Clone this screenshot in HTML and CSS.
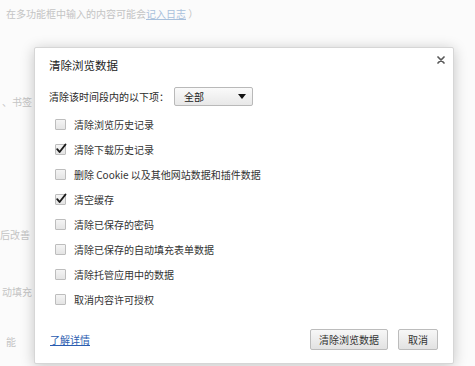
FILE: index.html
```html
<!DOCTYPE html>
<html lang="zh">
<head>
<meta charset="utf-8">
<link rel="stylesheet" href="styles.css">
</head>
<body>
<div class="page">
  <div class="bg-line top">在多功能框中输入的内容可能会<span class="bg-link">记入日志</span> ）</div>
  <div class="bg-line side l1">、书签和</div>
  <div class="bg-line side l2">后改善</div>
  <div class="bg-line side l3">动填充</div>
  <div class="bg-line side l4">能</div>
</div>

<div class="dialog">
  <div class="dlg-head">
    <span class="dlg-title">清除浏览数据</span>
    <span class="dlg-close">
      <svg width="8" height="8" viewBox="0 0 8 8"><path d="M1 1 L7 7 M7 1 L1 7" stroke="#5a5a5a" stroke-width="1.7" stroke-linecap="round"/></svg>
    </span>
  </div>
  <div class="time-row">
    <span class="time-label">清除该时间段内的以下项：</span>
    <span class="select">
      <span class="select-text">全部</span>
      <svg class="select-arrow" width="8" height="5" viewBox="0 0 8 5"><path d="M0 0 H8 L4 5 Z" fill="#111"/></svg>
    </span>
  </div>
  <div class="opts">
    <label class="opt"><span class="cb"></span><span>清除浏览历史记录</span></label>
    <label class="opt"><span class="cb"><svg width="12" height="12" viewBox="0 0 12 12"><path d="M2.2 6.2 L4.6 9 L10.5 1.5" fill="none" stroke="#1a1a1a" stroke-width="1.9" stroke-linecap="round" stroke-linejoin="round"/></svg></span><span>清除下载历史记录</span></label>
    <label class="opt"><span class="cb"></span><span>删除 Cookie 以及其他网站数据和插件数据</span></label>
    <label class="opt"><span class="cb"><svg width="12" height="12" viewBox="0 0 12 12"><path d="M2.2 6.2 L4.6 9 L10.5 1.5" fill="none" stroke="#1a1a1a" stroke-width="1.9" stroke-linecap="round" stroke-linejoin="round"/></svg></span><span>清空缓存</span></label>
    <label class="opt"><span class="cb"></span><span>清除已保存的密码</span></label>
    <label class="opt"><span class="cb"></span><span>清除已保存的自动填充表单数据</span></label>
    <label class="opt"><span class="cb"></span><span>清除托管应用中的数据</span></label>
    <label class="opt"><span class="cb"></span><span>取消内容许可授权</span></label>
  </div>
  <div class="dlg-foot">
    <a class="learn" href="#">了解详情</a>
    <div class="btns">
      <span class="btn btn-main">清除浏览数据</span>
      <span class="btn btn-cancel">取消</span>
    </div>
  </div>
</div>
</body>
</html>
```

FILE: styles.css
```css
html, body {
  margin: 0;
  padding: 0;
}
body {
  width: 475px;
  height: 366px;
  overflow: hidden;
  background: #fbfbfb;
  font-family: "Noto Sans CJK SC", "Noto Sans", sans-serif;
  position: relative;
}
.page {
  padding-left: 6px;
  color: #c4c4c4;
  font-size: 10px;
  line-height: 14px;
}
.bg-line { white-space: nowrap; }
.bg-line.top { padding-top: 7px; }
.bg-line.side { width: 30px; overflow: hidden; }
.bg-link { color: #a9c0dc; text-decoration: underline; }
.bg-line.l1 { margin-top: 74px; margin-left: -4px; }
.bg-line.l2 { margin-top: 119px; margin-left: -6px; }
.bg-line.l3 { margin-top: 43px; margin-left: -4px; }
.bg-line.l4 { margin-top: 36px; margin-left: 0; }

.dialog {
  position: absolute;
  left: 34px;
  top: 47px;
  width: 420px;
  height: 317px;
  box-sizing: border-box;
  background: #fff;
  border: 1px solid #d6d6d6;
  border-radius: 2px;
  box-shadow: 0 2px 14px rgba(0, 0, 0, 0.22);
  display: flex;
  flex-direction: column;
  padding: 0 14px 0 14px;
  color: #333;
  font-size: 10px;
}
.dlg-head {
  height: 33px;
  display: flex;
  align-items: center;
  justify-content: space-between;
}
.dlg-title {
  font-size: 11.5px;
  color: #222;
  padding-top: 1px;
}
.dlg-close {
  display: flex;
  margin-right: -6px;
  margin-top: -10px;
}
.time-row {
  height: 31px;
  display: flex;
  align-items: center;
}
.time-label {
  color: #2a2a2a;
}
.select {
  margin-left: 5px;
  width: 79px;
  height: 19px;
  box-sizing: border-box;
  border: 1px solid #b9b9b9;
  border-radius: 2px;
  background: linear-gradient(#fafafa, #e8e8e8);
  display: flex;
  align-items: center;
  justify-content: space-between;
  padding: 0 6px 0 9px;
  color: #222;
}
.opts {
  display: flex;
  flex-direction: column;
}
.opt {
  height: 25px;
  display: flex;
  align-items: center;
  padding-left: 6px;
  color: #333;
  white-space: nowrap;
}
.cb {
  width: 11px;
  height: 11px;
  box-sizing: border-box;
  border: 1px solid #bdbdbd;
  border-radius: 1px;
  background: linear-gradient(#f4f4f4, #e4e4e4);
  margin-right: 8px;
  position: relative;
  flex: none;
}
.cb svg {
  position: absolute;
  left: -1px;
  top: -2px;
}
.dlg-foot {
  margin-top: auto;
  height: 30px;
  padding-bottom: 9px;
  display: flex;
  align-items: center;
  justify-content: space-between;
}
.learn {
  color: #2a5db0;
  text-decoration: underline;
  padding-left: 1px;
}
.btns {
  display: flex;
  gap: 10px;
  margin-right: 1px;
}
.btn {
  height: 21px;
  box-sizing: border-box;
  border: 1px solid #bcbcbc;
  border-radius: 2px;
  background: linear-gradient(#f7f7f7, #e2e2e2);
  display: flex;
  align-items: center;
  justify-content: center;
  color: #333;
}
.btn-main { width: 78px; }
.btn-cancel { width: 40px; }
```
